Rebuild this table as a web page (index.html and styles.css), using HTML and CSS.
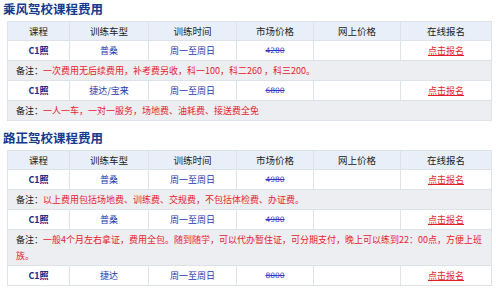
FILE: index.html
```html
<!DOCTYPE html>
<html lang="zh">
<head>
<meta charset="utf-8">
<link rel="stylesheet" href="styles.css">
</head>
<body>
<h2 class="title">乘风驾校课程费用</h2>
<table class="fees">
  <colgroup><col class="c1"><col class="c2"><col class="c3"><col class="c4"><col class="c5"><col class="c6"></colgroup>
  <tr class="head"><th>课程</th><th>训练车型</th><th>训练时间</th><th>市场价格</th><th>网上价格</th><th>在线报名</th></tr>
  <tr class="row"><td class="lic">C1照</td><td class="blue">普桑</td><td class="blue">周一至周日</td><td class="price">4280</td><td></td><td><a class="reg">点击报名</a></td></tr>
  <tr class="note"><td colspan="6"><span class="lbl">备注：</span>一次费用无后续费用，补考费另收，科一100，科二260 ，科三200。</td></tr>
  <tr class="row"><td class="lic">C1照</td><td class="blue">捷达/宝来</td><td class="blue">周一至周日</td><td class="price">6800</td><td></td><td><a class="reg">点击报名</a></td></tr>
  <tr class="note"><td colspan="6"><span class="lbl">备注：</span>一人一车，一对一服务，场地费、油耗费、接送费全免</td></tr>
</table>
<h2 class="title second">路正驾校课程费用</h2>
<table class="fees">
  <colgroup><col class="c1"><col class="c2"><col class="c3"><col class="c4"><col class="c5"><col class="c6"></colgroup>
  <tr class="head"><th>课程</th><th>训练车型</th><th>训练时间</th><th>市场价格</th><th>网上价格</th><th>在线报名</th></tr>
  <tr class="row"><td class="lic">C1照</td><td class="blue">普桑</td><td class="blue">周一至周日</td><td class="price">4980</td><td></td><td><a class="reg">点击报名</a></td></tr>
  <tr class="note"><td colspan="6"><span class="lbl">备注：</span>以上费用包括场地费、训练费、交规费，不包括体检费、办证费。</td></tr>
  <tr class="row"><td class="lic">C1照</td><td class="blue">普桑</td><td class="blue">周一至周日</td><td class="price">4980</td><td></td><td><a class="reg">点击报名</a></td></tr>
  <tr class="note"><td colspan="6"><span class="lbl">备注：</span>一般4个月左右拿证，费用全包。随到随学，可以代办暂住证，可分期支付，晚上可以练到22：00点，方便上班族。</td></tr>
  <tr class="row"><td class="lic">C1照</td><td class="blue">捷达</td><td class="blue">周一至周日</td><td class="price">8000</td><td></td><td><a class="reg">点击报名</a></td></tr>
</table>
</body>
</html>
```
FILE: styles.css
```css
body {
  margin: 0;
  background: #fff;
  font-family: "Noto Sans CJK SC", "Noto Sans", sans-serif;
  font-size: 9px;
  color: #333;
}
.title {
  margin: 0 0 3px 0;
  padding-left: 3px;
  font-size: 12.5px;
  line-height: 18px;
  font-weight: bold;
  color: #163a8e;
}
.title.second {
  margin-top: 8px;
}
.fees {
  margin-left: 7px;
  width: 484px;
  border-collapse: collapse;
  table-layout: fixed;
  border: 1px solid #dfe4ea;
}
.c1 { width: 62px; }
.c2 { width: 79px; }
.c3 { width: 88px; }
.c4 { width: 77px; }
.c5 { width: 87px; }
.c6 { width: 91px; }
.fees th, .fees td {
  border: 1px solid #dde2e9;
  text-align: center;
  padding: 1.5px 0;
  line-height: 16px;
}
.head th {
  background: #e8eff8;
  font-weight: normal;
  font-size: 9.5px;
  color: #222;
  padding: 1px 0;
}
.row td { background: #fff; }
.lic {
  font-weight: bold;
  color: #1c2a85;
}
.blue { color: #2437b0; }
.price {
  font-family: "DejaVu Sans", sans-serif;
  font-size: 7.5px;
  color: #3438c8;
  text-decoration: line-through;
}
.reg {
  color: #e21f26;
  text-decoration: underline;
}
.note td {
  background: #eceef2;
  text-align: left;
  padding-left: 8px;
  padding-right: 6px;
  color: #e8212b;
}
.lbl { color: #222; }
```
